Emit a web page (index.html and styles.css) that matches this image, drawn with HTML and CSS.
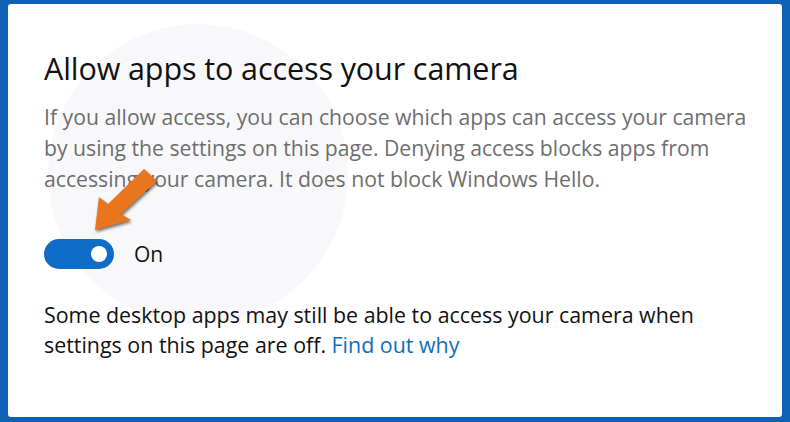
FILE: index.html
```html
<!DOCTYPE html>
<html lang="en">
<head>
<meta charset="utf-8">
<title>Camera privacy</title>
<link rel="stylesheet" href="styles.css">
</head>
<body>
<div class="frame">
  <div class="panel">
    <div class="wm-circle"></div>
    <div class="content">
      <h1 class="title">Allow apps to access your camera</h1>
      <p class="desc">If you allow access, you can choose which apps can access your camera by using the settings on this page. Denying access blocks apps from accessing your camera. It does not block Windows Hello.</p>
      <div class="toggle-row">
        <span class="toggle"><span class="knob"></span></span>
        <span class="toggle-label">On</span>
      </div>
      <p class="note"><span>Some desktop apps may still be able to access your camera when settings on this page are off.</span> <a class="link" href="#">Find out why</a></p>
    </div>
    <svg class="arrow" width="80" height="80" viewBox="0 0 80 80" aria-hidden="true">
      <polygon points="5,63 9,30 18,37 54,2 67,14 31,47 41,53" fill="#e9761f"/>
    </svg>
  </div>
</div>
</body>
</html>
```
FILE: styles.css
```css
html, body {
  margin: 0;
  padding: 0;
  width: 790px;
  height: 422px;
  overflow: hidden;
}
body {
  font-family: "Open Sans", "Noto Sans", sans-serif;
}
.frame {
  box-sizing: border-box;
  width: 790px;
  height: 422px;
  background: #0e62b6;
  padding: 4px 8px 5px 8px;
}
.panel {
  position: relative;
  height: 100%;
  background: #ffffff;
  border-radius: 3px;
  overflow: hidden;
}
.wm-circle {
  position: absolute;
  left: 40px;
  top: 20px;
  width: 300px;
  height: 300px;
  border-radius: 50%;
  background: #f8f8fa;
}
.content {
  position: relative;
  padding: 44px 0 0 36px;
}
.title {
  margin: 0;
  font-size: 30.5px;
  font-weight: 400;
  line-height: 40px;
  color: #111111;
  letter-spacing: -0.1px;
}
.desc {
  margin: 13px 0 0 0;
  width: 715px;
  font-size: 21.2px;
  line-height: 31px;
  color: #6e6e6e;
}
.toggle-row {
  display: flex;
  align-items: center;
  gap: 20px;
  margin-top: 45px;
  height: 30px;
}
.toggle {
  box-sizing: border-box;
  width: 70px;
  height: 30px;
  border-radius: 15px;
  background: #0f6cc7;
  display: flex;
  align-items: center;
  justify-content: flex-end;
  padding-right: 7px;
}
.knob {
  width: 16px;
  height: 16px;
  border-radius: 50%;
  background: #ffffff;
}
.toggle-label {
  font-size: 21px;
  line-height: 30px;
  color: #111111;
}
.note {
  margin: 31px 0 0 0;
  width: 715px;
  font-size: 21.4px;
  line-height: 30px;
  color: #111111;
}
.link {
  color: #0f6cc2;
  text-decoration: none;
}
.arrow {
  position: absolute;
  left: 82px;
  top: 163px;
  filter: drop-shadow(1px 2px 1.5px rgba(0,0,0,0.55));
}
```
